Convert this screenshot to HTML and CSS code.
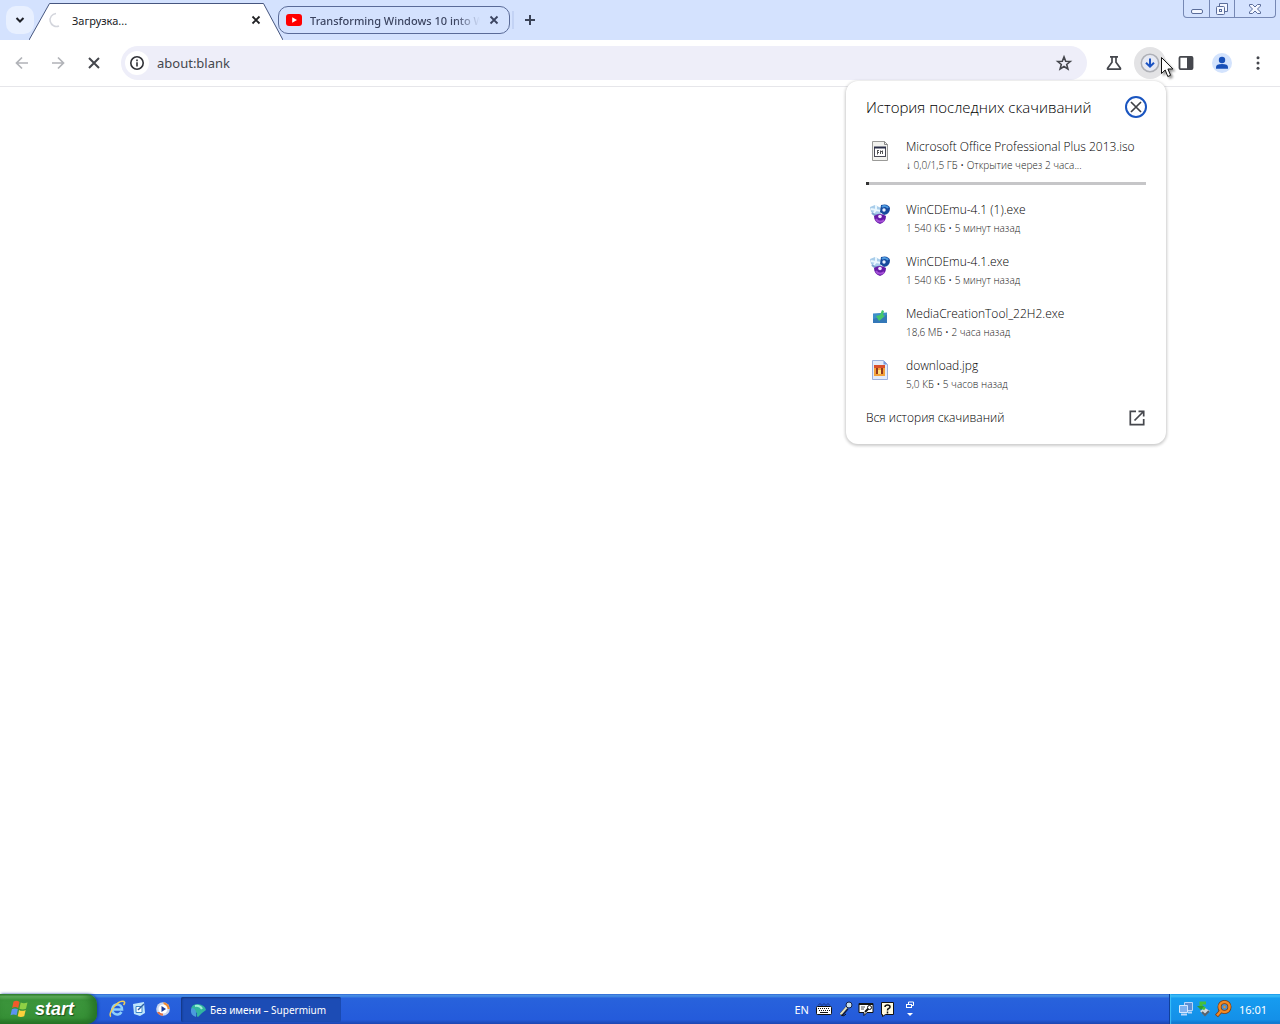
FILE: index.html
```
<!DOCTYPE html>
<html lang="ru">
<head>
  <meta charset="UTF-8">
  <meta name="viewport" content="width=device-width, initial-scale=1.0">
  <title>about:blank</title>
  <link rel="stylesheet" href="styles.css">
</head>
<body>
  <svg class="sprite" aria-hidden="true">
    <symbol id="icon-close" viewBox="0 0 16 16">
      <path d="M4.500 4.500l7 7M11.500 4.500l-7 7" fill="none" stroke="currentColor" stroke-width="1.800"/>
    </symbol>
    <symbol id="icon-wincdemu" viewBox="0 0 20 20">
      <path d="M0 3l5-2 6 3v6l-5 2-5-4z" fill="#a9cdea"/>
      <path d="M1 5l5 1-3 4M6 1v5l5 1" fill="none" stroke="#e9f7ff" stroke-width="2"/>
      <path d="M2 9q4 4 8 1" fill="none" stroke="#7ea3cf" stroke-width="2"/>
      <path d="M11 1q7-2 9 3 0 6-6 7l-4-3z" fill="#174a9e"/>
      <path d="M12 3a4 4 0 0 1 6 1" fill="none" stroke="#4d9be0" stroke-width="2"/>
      <circle cx="14" cy="6" r="1.700" fill="#e6f0ff"/>
      <path d="M4 12q6-4 12 0 0 6-6 8-6-2-6-8z" fill="#661ba8"/>
      <path d="M6 15a5 5 0 0 0 8 1" fill="none" stroke="#a551d6" stroke-width="2"/>
      <circle cx="10" cy="12.500" r="1.800" fill="#f1e5ff"/>
    </symbol>
  </svg>

  <header class="tab-strip">
    <button class="tab-search" aria-label="Поиск вкладок">
      <svg width="12" height="12" viewBox="0 0 12 12"><path d="M2.500 4l3.500 3.500L9.500 4" fill="none" stroke="#1f2229" stroke-width="2"/></svg>
    </button>
    <div class="tab tab-active">
      <svg class="tab-shape" viewBox="0 0 254 40" preserveAspectRatio="none"><path d="M0 40L20.500 3.500H234.500L254 40" fill="#fff" stroke="#46567f"/></svg>
      <svg class="tab-icon" width="16" height="16" viewBox="0 0 16 16"><path d="M8 1.500A6.500 6.500 0 1 0 11 14" fill="none" stroke="#d3d5dc" stroke-width="1.500"/></svg>
      <span class="tab-title">Загрузка...</span>
      <button class="tab-close" aria-label="Закрыть"><svg width="16" height="16"><use href="#icon-close"/></svg></button>
    </div>
    <div class="tab tab-inactive">
      <svg class="tab-icon" width="16" height="16" viewBox="0 0 16 16"><rect y="2" width="16" height="12" rx="3" fill="#f00"/><path d="M6.200 5.200v5.600L11 8z" fill="#fff"/></svg>
      <span class="tab-title">Transforming Windows 10 into W</span>
      <button class="tab-close" aria-label="Закрыть"><svg width="16" height="16"><use href="#icon-close"/></svg></button>
    </div>
    <button class="new-tab" aria-label="Новая вкладка">
      <svg width="12" height="12" viewBox="0 0 12 12"><path d="M6 1v10M1 6h10" stroke="#3b4358" stroke-width="2"/></svg>
    </button>
    <div class="window-buttons">
      <button aria-label="Свернуть"><svg width="14" height="12" viewBox="0 0 14 12"><rect x="1.500" y="6.500" width="11" height="4" rx="1.500" fill="#f4f7ff" stroke="#5b6d9a"/></svg></button>
      <button aria-label="Восстановить"><svg width="14" height="14" viewBox="0 0 14 14"><path d="M4.500 4V1.500h8v8H10" fill="#f4f7ff" stroke="#5b6d9a"/><rect x="1.500" y="4.500" width="8" height="8" rx="1" fill="#f4f7ff" stroke="#5b6d9a"/><rect x="4.500" y="7.500" width="2" height="2" fill="none" stroke="#5b6d9a"/></svg></button>
      <button class="wide" aria-label="Закрыть окно"><svg width="14" height="12" viewBox="0 0 14 12"><path d="M1.500 1.500h3L7 4l2.500-2.500h3V3L9.500 6l3 3v1.500h-3L7 8l-2.500 2.500h-3V9l3-3-3-3z" fill="#f4f7ff" stroke="#5b6d9a"/></svg></button>
    </div>
  </header>

  <nav class="toolbar">
    <button class="tool" aria-label="Назад"><svg width="16" height="16" viewBox="0 0 16 16"><path d="M14 8H3M8 2.500L2.500 8 8 13.500" fill="none" stroke="#b1b3b8" stroke-width="1.700"/></svg></button>
    <button class="tool" aria-label="Вперёд"><svg width="16" height="16" viewBox="0 0 16 16"><path d="M2 8h11M8 2.500L13.500 8 8 13.500" fill="none" stroke="#b1b3b8" stroke-width="1.700"/></svg></button>
    <button class="tool" aria-label="Остановить загрузку"><svg width="16" height="16" viewBox="0 0 16 16"><path d="M3 3l10 10M13 3L3 13" stroke="#45474d" stroke-width="2"/></svg></button>
    <div class="omnibox">
      <button class="site-info" aria-label="Сведения о сайте"><svg width="16" height="16" viewBox="0 0 16 16"><circle cx="8" cy="8" r="6.200" fill="none" stroke="#303136" stroke-width="1.600"/><path d="M8 7.200V11.500M8 4.500v1.700" stroke="#303136" stroke-width="1.600"/></svg></button>
      <input type="text" value="about:blank" aria-label="Адресная строка">
      <button class="bookmark" aria-label="Добавить в закладки"><svg width="18" height="18" viewBox="0 0 18 18"><path d="M9 2.900l1.700 4.300 4.600.3-3.600 3 1.200 4.400L9 12.500l-3.900 2.400 1.200-4.400-3.600-3 4.600-.3z" fill="none" stroke="#45474d" stroke-width="1.600"/></svg></button>
    </div>
    <button class="tool" aria-label="Эксперименты"><svg width="16" height="16" viewBox="0 0 16 16"><path d="M4 1.800h8M6 2v5.200L1.600 13.200q-.4 1 .6 1h11.600q1 0 .6-1L10 7.200V2" fill="none" stroke="#45474d" stroke-width="1.700"/></svg></button>
    <button class="tool tool-downloads" aria-label="Скачанные файлы"><svg width="20" height="20" viewBox="0 0 20 20"><circle cx="10" cy="10" r="8.700" fill="#e6e9f3" stroke="#aeb0b6" stroke-width="1.500"/><path d="M10 5.500v8M6 9.700l4 4 4-4" fill="none" stroke="#1a52c2" stroke-width="2"/></svg></button>
    <button class="tool" aria-label="Боковая панель"><svg width="16" height="16" viewBox="0 0 16 16"><rect x="1.500" y="1.900" width="13" height="12.200" rx="1" fill="none" stroke="#45474d" stroke-width="1.800"/><path d="M9 2h5.500v12H9z" fill="#45474d"/></svg></button>
    <button class="tool" aria-label="Профиль"><svg width="20" height="20" viewBox="0 0 20 20"><circle cx="10" cy="10" r="10" fill="#d3e3fd"/><circle cx="10" cy="7" r="3.200" fill="#174fb8"/><path d="M4 15.800v-1.600q0-3.200 6-3.200t6 3.200v1.600z" fill="#174fb8"/></svg></button>
    <button class="tool" aria-label="Меню"><svg width="16" height="16" viewBox="0 0 16 16"><g fill="#45474d"><circle cx="8" cy="2.800" r="1.500"/><circle cx="8" cy="8" r="1.500"/><circle cx="8" cy="13.200" r="1.500"/></g></svg></button>
    <svg class="cursor" width="13" height="21" viewBox="0 0 13 21"><path d="M.5.500v16l3.700-3.500 2.600 6.500 2.800-1.200-2.700-6.300h5z" fill="#fff" stroke="#111"/></svg>
  </nav>

  <main class="page">
    <section class="downloads">
      <div class="downloads-header">
        <h1>История последних скачиваний</h1>
        <button class="downloads-close" aria-label="Закрыть"><svg width="16" height="16" viewBox="0 0 16 16"><path d="M3 3l10 10M13 3L3 13" stroke="#3f4147" stroke-width="1.700"/></svg></button>
      </div>
      <ul>
        <li class="in-progress">
          <svg class="file-icon" width="20" height="20" viewBox="0 0 20 20"><path d="M2.500.500h12l3 3v16h-15z" fill="#f2f2ee" stroke="#9a9a98"/><path d="M14.500.500v3h3" fill="none" stroke="#888"/><rect x="4.500" y="6.500" width="11" height="9" fill="#fff" stroke="#4a4a55"/><path d="M4 6.500h12" stroke="#2b2f48" stroke-width="2"/><path d="M7.500 9.500v4M7 9.500h2M7 11.500h2M10.500 13V9.500M12.500 9.500V13M10 10.500h3" fill="none" stroke="#555"/></svg>
          <div class="file-text">
            <p class="file-name">Microsoft Office Professional Plus 2013.iso</p>
            <p class="file-info">↓ 0,0/1,5 ГБ • Открытие через 2 часа...</p>
          </div>
          <progress value="1" max="100" aria-label="Ход скачивания"></progress>
        </li>
        <li>
          <svg class="file-icon" width="20" height="20"><use href="#icon-wincdemu"/></svg>
          <div class="file-text">
            <p class="file-name">WinCDEmu-4.1 (1).exe</p>
            <p class="file-info">1 540 КБ • 5 минут назад</p>
          </div>
        </li>
        <li>
          <svg class="file-icon" width="20" height="20"><use href="#icon-wincdemu"/></svg>
          <div class="file-text">
            <p class="file-name">WinCDEmu-4.1.exe</p>
            <p class="file-info">1 540 КБ • 5 минут назад</p>
          </div>
        </li>
        <li>
          <svg class="file-icon" width="20" height="20" viewBox="0 0 20 20"><path d="M3 5.500l14-1V15H3z" fill="#3f8fca"/><path d="M3 11l14-4v8H3z" fill="#3478b8"/><path d="M6 8l4-1 2-5 2 1-1 4 2 1-6 5z" fill="#45c76b"/></svg>
          <div class="file-text">
            <p class="file-name">MediaCreationTool_22H2.exe</p>
            <p class="file-info">18,6 МБ • 2 часа назад</p>
          </div>
        </li>
        <li>
          <svg class="file-icon" width="20" height="20" viewBox="0 0 20 20"><path d="M2.500.500h11l4 4v15h-15z" fill="#e3ebfa" stroke="#9db1dc"/><path d="M13.500.500v4h4z" fill="#7a9adb"/><rect x="4" y="5" width="11" height="11" fill="#f3a23a"/><path d="M4 5h11v3H4z" fill="#d9502b"/><path d="M6 8h2v6H6zM11 8h2v6h-2z" fill="#93381f"/><path d="M8 10h3v4H8z" fill="#ffe07c"/></svg>
          <div class="file-text">
            <p class="file-name">download.jpg</p>
            <p class="file-info">5,0 КБ • 5 часов назад</p>
          </div>
        </li>
      </ul>
      <a class="downloads-all" href="#">
        Вся история скачиваний
        <svg width="20" height="20" viewBox="0 0 20 20"><path d="M9 3.300H3.300v13.400h13.400V11M11.500 3.300h5.200v5.200M16.500 3.500L7.500 12.500" fill="none" stroke="#45474d" stroke-width="1.700"/></svg>
      </a>
    </section>
  </main>

  <footer class="taskbar">
    <button class="start">
      <svg width="20" height="20" viewBox="0 0 20 20"><path d="M3.500 2.500q3.500-1.500 6 .5L8.200 9q-3-1.800-6 0z" fill="#f0592b"/><path d="M10.700 3.500q3 1.600 6.800 0L16 9.700q-3.500 1.500-6.600 0z" fill="#8fd045"/><path d="M1.900 10.300q3-1.800 6 0l-1.400 6q-2.800-1.700-6 0z" fill="#5b93f0"/><path d="M9.100 11q3 1.700 6.600 0l-1.500 6.200q-3.400 1.500-6.500 0z" fill="#fbd03c"/></svg>
      start
    </button>
    <div class="quick-launch">
      <button aria-label="Internet Explorer"><svg width="18" height="18" viewBox="0 0 18 18"><path d="M13.500 12a5 5 0 1 1 .3-4.500L14 9.500H5" fill="none" stroke="#8fd0fb" stroke-width="2.500"/><path d="M3 16.500C-1 14 10-1 16 1.500q1.500 1-.5 3.500" fill="none" stroke="#f1cf55" stroke-width="1.500"/></svg></button>
      <button aria-label="Рабочий стол"><svg width="18" height="18" viewBox="0 0 18 18"><path d="M2 4l11-2 1 11-5 3-6-2z" fill="#bfe6fb"/><path d="M5 6.500h6v6H5z" fill="#fff" stroke="#3a86c9"/><path d="M7 10l6-6" stroke="#2c5fa5" stroke-width="1.500"/></svg></button>
      <button aria-label="Проигрыватель"><svg width="18" height="18" viewBox="0 0 18 18"><circle cx="9" cy="9" r="6.800" fill="#c9d6ee"/><path d="M9 2.200a6.800 6.800 0 0 1 6.800 6.800H12z" fill="#f08c35"/><path d="M3 12a6.800 6.800 0 0 0 6 3.800V12z" fill="#e2744a"/><circle cx="9" cy="9" r="4.500" fill="#fff"/><path d="M7.500 6v6L12 9z" fill="#173d9e"/></svg></button>
    </div>
    <button class="task">
      <svg width="16" height="16" viewBox="0 0 16 16"><path d="M1 8q0-6 7-6 7 1 8 6l-4 3-4 4q-2-1-1-4z" fill="#31b5a0"/><path d="M2 6q5 0 4 9Q0 13 1 8z" fill="#4b9cdd"/><path d="M5 4q5-1 7 3" fill="none" stroke="#9cf0d4" stroke-width="2"/></svg>
      Без имени – Supermium
    </button>
    <div class="language-bar">
      <button class="lang">EN</button>
      <button aria-label="Клавиатура"><svg width="16" height="16" viewBox="0 0 16 16"><path d="M2 4.500l2-2 2 2 2-2 2 2 2-2 2 2" fill="none" stroke="#16307c"/><rect x=".5" y="5.500" width="15" height="8" rx="1" fill="#fff" stroke="#111"/><path d="M2 7.500h12M3 9.500h11" stroke="#111" stroke-dasharray="1 1"/><path d="M4 11.500h8" stroke="#111"/></svg></button>
      <button aria-label="Микрофон"><svg width="16" height="16" viewBox="0 0 16 16"><path d="M4 14l6-7" stroke="#101b40" stroke-width="4"/><path d="M3.500 13.500L10 6" stroke="#e6e3bd" stroke-width="2"/><circle cx="12" cy="4" r="3" fill="#c9dfee" stroke="#142247"/><path d="M4 14q3 2 5-1" fill="none" stroke="#111"/></svg></button>
      <button aria-label="Инструменты"><svg width="16" height="16" viewBox="0 0 16 16"><path d="M1 2.500h14v9H9l-3 3v-3H1z" fill="#fff" stroke="#111"/><path d="M1 3h14" stroke="#111" stroke-width="2"/><path d="M3 6h4M3 8h3" stroke="#555"/><path d="M7 11l4-4" stroke="#111" stroke-width="2"/><circle cx="11.500" cy="6.500" r="2" fill="#fff" stroke="#111"/></svg></button>
      <button aria-label="Справка"><svg width="16" height="16" viewBox="0 0 16 16"><path d="M2.500 1.500h12v12h-8l-3 2v-2h-1z" fill="#fffbe0" stroke="#111"/><path d="M6 6q0-2 2.500-2T11 6q0 1-1.300 1.500T8.500 9.500M8.500 10.500v2" fill="none" stroke="#111" stroke-width="1.500"/></svg></button>
      <div class="language-options">
        <button aria-label="Восстановить панель"><svg width="10" height="8" viewBox="0 0 10 8"><path d="M3.500 3V1h5v3.500H7" fill="none" stroke="#fff"/><rect x="1.500" y="3.500" width="5" height="3" fill="none" stroke="#fff"/></svg></button>
        <button aria-label="Параметры"><svg width="10" height="8" viewBox="0 0 10 8"><path d="M2 3h6L5 6z" fill="#fff"/></svg></button>
      </div>
    </div>
    <div class="tray">
      <svg width="16" height="16" viewBox="0 0 16 16"><path d="M6.500 1.500h8v8h-8z" fill="#5d8fd6" stroke="#b9d6fa"/><path d="M1.500 4.500h8v7h-8z" fill="#7fb2f0" stroke="#d5e8ff"/><path d="M3 13.500h6M10 11.500h4" stroke="#b9d6fa" stroke-width="2"/></svg>
      <svg width="16" height="16" viewBox="0 0 16 16"><path d="M4 10l5-3 5 3-5 5z" fill="#d4dade"/><path d="M6 11l3 3 4-4" fill="none" stroke="#55626e" stroke-width="2"/><path d="M10 2H5v3l4 3" fill="none" stroke="#45c13a" stroke-width="3"/><path d="M1 5h7L5 9z" fill="#2f9e35"/></svg>
      <svg width="18" height="18" viewBox="0 0 18 18"><circle cx="10.500" cy="7" r="5" fill="#4b91cd" stroke="#793b16" stroke-width="4"/><path d="M7 11l-4.500 5" stroke="#793b16" stroke-width="4"/><circle cx="10.500" cy="7" r="5" fill="none" stroke="#f18a24" stroke-width="2.500"/><path d="M7 11l-4 4.500" stroke="#f18a24" stroke-width="2.500"/><circle cx="10.500" cy="7" r="1.200" fill="#f18a24"/></svg>
      <time>16:01</time>
    </div>
  </footer>
</body>
</html>
```

FILE: styles.css
```
* {
  margin: 0;
  padding: 0;
  box-sizing: border-box;
}

body {
  display: flex;
  flex-direction: column;
  min-height: 100vh;
  background-color: #fff;
  color: #202124;
  font-family: 'Noto Sans', 'Open Sans', sans-serif;
  font-size: 12px;
}

button {
  display: flex;
  align-items: center;
  justify-content: center;
  flex-shrink: 0;
  border: none;
  background: none;
  color: inherit;
  font: inherit;
}

svg {
  display: block;
  flex-shrink: 0;
}

ul {
  list-style: none;
}

.sprite {
  position: absolute;
  width: 0;
  height: 0;
}

/* Tabs */
.tab-strip {
  display: flex;
  align-items: center;
  height: 40px;
  padding: 0 4px 0 6px;
  background-color: #d4e2fe;
}

.tab-search {
  width: 28px;
  height: 28px;
  border-radius: 10px;
  background-color: #e8f0ff;
}

.tab {
  display: flex;
  align-items: center;
  min-width: 0;
  font-size: 11px;
}

.tab-active {
  position: relative;
  width: 254px;
  height: 40px;
  margin-left: -5px;
  padding: 0 19px 0 19px;
}

.tab-shape {
  position: absolute;
  top: 0;
  left: 0;
  width: 100%;
  height: 100%;
}

.tab-active > :not(.tab-shape) {
  position: relative;
}

.tab-inactive {
  width: 232px;
  height: 28px;
  margin-left: -5px;
  padding: 0 7px;
  border: 1px solid #5a6b98;
  border-radius: 10px;
  color: #3b4460;
  font-weight: 500;
}

.tab-title {
  flex: 1;
  margin-left: 8px;
  white-space: nowrap;
}

.tab-inactive .tab-title {
  mask-image: linear-gradient(to right, #000 145px, transparent 170px);
}

.tab-close {
  width: 16px;
  height: 16px;
}

.new-tab {
  width: 34px;
  height: 28px;
  margin-left: 2px;
  border-style: solid;
  border-image: linear-gradient(transparent 20%, #c3d3f5 20%, #c3d3f5 80%, transparent 80%) 1;
  border-width: 0 0 0 2px;
}

.window-buttons {
  display: flex;
  align-self: flex-start;
  height: 18px;
  margin-left: auto;
  border: 1px solid #7688b4;
  border-top: none;
  border-radius: 0 0 4px 4px;
}

.window-buttons button {
  width: 25px;
}

.window-buttons button + button {
  border-left: 1px solid #7688b4;
}

.window-buttons .wide {
  width: 41px;
}

/* Toolbar */
.toolbar {
  position: relative;
  display: flex;
  align-items: center;
  height: 47px;
  padding: 0 4px;
  border-bottom: 1px solid #e6e6ea;
}

.tool {
  width: 36px;
  height: 36px;
  border-radius: 50%;
}

.tool-downloads {
  background-color: #e3e3e5;
  background-clip: content-box;
  padding: 2px;
}

.omnibox {
  display: flex;
  align-items: center;
  flex: 1;
  height: 34px;
  margin: 0 9px;
  padding: 0 14px 0 4px;
  border-radius: 17px;
  background-color: #eeeef9;
}

.site-info {
  width: 24px;
  height: 24px;
  border-radius: 50%;
  background-color: #fff;
}

.omnibox input {
  flex: 1;
  min-width: 0;
  margin-left: 8px;
  border: none;
  outline: none;
  background: none;
  color: #45474d;
  font: inherit;
  font-size: 13px;
}

.cursor {
  position: absolute;
  top: 17px;
  right: 106px;
  filter: drop-shadow(2px 2px 1px rgba(0, 0, 0, 0.4));
}

/* Downloads bubble */
.page {
  position: relative;
  flex: 1;
}

.downloads {
  position: absolute;
  top: -6px;
  right: 114px;
  width: 320px;
  padding: 10px 19px 3px 20px;
  border-radius: 12px;
  background-color: #fff;
  box-shadow: 0 1px 3px 1px rgba(0, 0, 0, 0.2);
  color: #000;
  font-family: 'Open Sans', 'Noto Sans', sans-serif;
  font-weight: 300;
}

.downloads-header {
  display: flex;
  align-items: center;
  justify-content: space-between;
  height: 32px;
}

.downloads-header h1 {
  font-size: 15px;
  font-weight: 300;
}

.downloads-close {
  width: 22px;
  height: 22px;
  border: 2px solid #1a55c0;
  border-radius: 50%;
}

.downloads li {
  display: flex;
  flex-wrap: wrap;
  align-items: flex-start;
  gap: 0 16px;
  height: 52px;
  padding: 12px 4px 0;
}

.downloads .in-progress {
  height: 63px;
}

.file-icon {
  margin-top: 6px;
}

.file-text {
  flex: 1;
}

.file-name {
  line-height: 24px;
}

.file-info {
  color: #222;
  font-size: 10px;
  line-height: 13px;
}

.downloads progress {
  width: 280px;
  height: 3px;
  margin: 8px -4px 0;
  border: none;
  appearance: none;
}

progress::-webkit-progress-bar {
  background-color: #c6c6c8;
}

progress::-webkit-progress-value {
  background-color: #333;
}

.downloads-all {
  display: flex;
  align-items: center;
  justify-content: space-between;
  height: 47px;
  color: #000;
  text-decoration: none;
}

/* Taskbar */
.taskbar {
  display: flex;
  align-items: stretch;
  height: 30px;
  background: linear-gradient(#3168d5 0, #4993e6 6%, #2862dc 14%, #245bdb 85%, #1c46b0 100%);
  color: #fff;
  font-size: 11px;
}

.start {
  justify-content: flex-start;
  gap: 5px;
  width: 97px;
  padding-left: 10px;
  border-radius: 0 10px 10px 0;
  background: linear-gradient(#317f31 0, #6dba68 8%, #3c953c 20%, #379137 80%, #257225 100%);
  box-shadow: inset -5px 0 8px #257225, 1px 0 3px #163d9b;
  font: italic bold 18px 'Liberation Sans', Arial, sans-serif;
  text-shadow: 1px 1px 1px #1c4f1c;
}

.quick-launch {
  display: flex;
  align-items: center;
  gap: 5px;
  margin-left: 11px;
}

.task {
  justify-content: flex-start;
  gap: 4px;
  width: 160px;
  margin: 3px 0 2px 9px;
  padding-left: 9px;
  border-radius: 2px;
  background-color: #1c4cb5;
  box-shadow: inset 1px 1px 2px #12347f;
  font-size: 10px;
  white-space: nowrap;
}

.language-bar {
  display: flex;
  align-items: center;
  gap: 5px;
  margin-left: auto;
  margin-right: 254px;
}

.lang {
  margin-right: 2px;
}

.language-options {
  display: flex;
  flex-direction: column;
  gap: 1px;
  margin-left: 5px;
}

.tray {
  display: flex;
  align-items: center;
  gap: 2px;
  padding: 0 13px 0 8px;
  border-left: 1px solid #10409a;
  background: linear-gradient(#1290e8 0, #3fc0f8 6%, #169cf0 14%, #1490e8 85%, #1070c8 100%);
  box-shadow: inset 1px 0 1px #3fc0f8;
}

.tray time {
  margin-left: 5px;
}
```
